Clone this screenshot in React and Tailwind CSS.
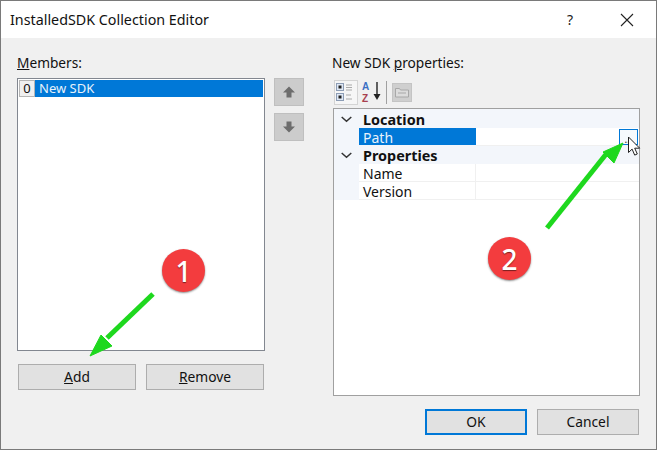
import React from "react";

const FONT = "font-['Noto_Sans','Open_Sans',sans-serif]";

function WinButton({ children, focused, className = "" }) {
  return (
    <div
      className={`flex items-center justify-center h-[26px] bg-[#e1e1e1] text-[13.8px] text-[#111] ${
        focused ? "border-2 border-[#0078d7]" : "border border-[#adadad]"
      } ${className}`}
    >
      {children}
    </div>
  );
}

function MoveButton({ down }) {
  return (
    <div className="flex items-center justify-center w-[30px] h-[28px] bg-[#cccccc] border border-[#bfbfbf]">
      <svg width="14" height="14" viewBox="0 0 14 14" className={down ? "rotate-180" : ""}>
        <path d="M7 1.5 L13 7.5 H9.5 V12.5 H4.5 V7.5 H1 Z" fill="#6d6d6d" />
      </svg>
    </div>
  );
}

function Chevron() {
  return (
    <svg width="11" height="7" viewBox="0 0 11 7" className="ml-[7px] mt-[1px]">
      <path d="M0.7 1 L5.5 5.2 L10.3 1" fill="none" stroke="#333" strokeWidth="1.5" />
    </svg>
  );
}

function CategoryRow({ label, first }) {
  return (
    <div className={`flex items-center bg-[#f3f6fb] ${first ? "h-[19px] pt-[1px]" : "h-[18px]"}`}>
      <div className="w-[29px] flex items-center">
        <Chevron />
      </div>
      <span className="text-[14.4px] font-bold text-[#111] leading-[18px] pt-[1px]">{label}</span>
    </div>
  );
}

function PropRow({ label, selected, children }) {
  return (
    <div className="flex h-[18px] bg-[#f3f6fb]">
      <div className="w-[25px]" />
      <div
        className={`w-[117px] pl-[4px] text-[14px] leading-[20px] ${
          selected ? "bg-[#0078d7] text-[#e8f2fb] border-b border-[#f3f6fb]" : "bg-white border-b border-r border-[#f0f0f0] text-[#111]"
        }`}
      >
        {label}
      </div>
      <div className="flex-1 bg-white flex justify-end border-b border-[#f0f0f0]">{children}</div>
    </div>
  );
}

function Toolbar() {
  return (
    <div className="flex items-center h-[26px] ml-[2px] mt-[1px]">
      <div className="w-[24px] h-[25px] bg-[#f6f6f6] border border-[#d4d4d4] flex items-center justify-center">
        <svg width="20" height="20" viewBox="0 0 20 20">
          <rect x="0.5" y="1.5" width="7" height="7" fill="#dfe8f5" stroke="#8d9db5" />
          <rect x="2.5" y="3.5" width="3" height="3" fill="#222" />
          <rect x="0.5" y="11.5" width="7" height="7" fill="#dfe8f5" stroke="#8d9db5" />
          <rect x="2.5" y="13.5" width="3" height="3" fill="#222" />
          <path d="M10 3h6M10 5.5h6M10 8h6M10 13h5M10 17h6" stroke="#aaa" strokeWidth="1" />
        </svg>
      </div>
      <div className="relative w-[28px] h-[25px] font-['Liberation_Sans',sans-serif]">
        <span className="absolute left-[4px] top-[1px] text-[10px] leading-[12px] font-bold text-[#3b6fc4]">A</span>
        <span className="absolute left-[4px] top-[13px] text-[10px] leading-[12px] font-bold text-[#a8404f]">Z</span>
        <svg width="8" height="20" viewBox="0 0 8 20" className="absolute left-[15px] top-[2px]">
          <path d="M4 0 V14" stroke="#222" strokeWidth="1.4" />
          <path d="M0.5 12 H7.5 L4 18 Z" fill="#222" />
        </svg>
      </div>
      <div className="w-px h-[23px] bg-[#a0a0a0] mr-[5px]" />
      <div className="w-[20px] h-[19px] bg-[#cfcfcf] border border-[#c4c4c4] flex items-center justify-center">
        <svg width="16" height="12" viewBox="0 0 16 12">
          <path d="M1.5 2.5h4l1 1.5h8v7h-13z" fill="#dcdcdc" stroke="#a8a8a8" />
          <path d="M4 7h8" stroke="#a8a8a8" />
        </svg>
      </div>
    </div>
  );
}

function Annotations() {
  return (
    <svg width="657" height="450" viewBox="0 0 657 450" className="absolute left-0 top-0 pointer-events-none">
      <path d="M628.5 137 v15.5 l3.6 -3.4 l2.6 6 l2.6 -1.1 l-2.6 -5.8 h5 z" fill="#fff" stroke="#222" strokeWidth="1" />
      <path d="M153 294 L107 338" stroke="#1ed81e" strokeWidth="5" fill="none" />
      <path d="M90 356 L101 335 L112 346 Z" fill="#1ed81e" stroke="#1ed81e" strokeWidth="1" />
      <path d="M547 228 L607 153" stroke="#1ed81e" strokeWidth="5" fill="none" />
      <path d="M623 143 L603 152 L614 163 Z" fill="#1ed81e" stroke="#1ed81e" strokeWidth="1" />
    </svg>
  );
}

function Badge({ className, children }) {
  return (
    <div
      className={`absolute w-[43px] h-[43px] rounded-full bg-[#f33c3e] shadow-[0_1px_2px_rgba(0,0,0,0.45)] flex items-center justify-center text-white text-[28px] font-medium [text-shadow:0_1px_1px_rgba(0,0,0,0.5)] ${className}`}
    >
      {children}
    </div>
  );
}

export default function App() {
  return (
    <div className={`relative w-[657px] h-[450px] overflow-hidden bg-[#f0f0f0] border border-[#7a7a7a] ${FONT}`}>
      <div className="flex items-center justify-between h-[37px] bg-white pl-[9px]">
        <span className="text-[14.3px] text-[#111]">InstalledSDK Collection Editor</span>
        <div className="flex items-center">
          <span className="text-[14px] text-[#222] mr-[47px]">?</span>
          <svg width="14" height="14" viewBox="0 0 14 14" className="mr-[22px]">
            <path d="M1 1 L13 13 M13 1 L1 13" stroke="#222" strokeWidth="1.1" />
          </svg>
        </div>
      </div>

      <div className="flex pl-[16px] pt-[15px]">
        <div className="w-[248px]">
          <div className="h-[25px] text-[13.7px] leading-[20px] text-[#111]">
            <u>M</u>embers:
          </div>
          <div className="flex">
            <div className="w-[248px] h-[273px] shrink-0 bg-white border border-[#828790] p-px">
              <div className="flex h-[17px] bg-[#0078d7]">
                <div className="flex items-center justify-center w-[16px] bg-[#f0f0f0] border border-[#b5b5b5] text-[13px] text-[#111] leading-none">
                  0
                </div>
                <span className="pl-[4px] text-[13px] leading-[17px] text-[#e8f2fb]">New SDK</span>
              </div>
            </div>
            <div className="flex flex-col gap-[7px] ml-[9px] shrink-0">
              <MoveButton />
              <MoveButton down />
            </div>
          </div>
          <div className="flex gap-[10px] mt-[13px] ml-px">
            <WinButton className="w-[118px]">
              <span>
                <u>A</u>dd
              </span>
            </WinButton>
            <WinButton className="w-[118px]">
              <span>
                <u>R</u>emove
              </span>
            </WinButton>
          </div>
        </div>

        <div className="w-[308px] ml-[67px]">
          <div className="h-[25px] text-[13.7px] leading-[20px] text-[#111]">
            New SDK <u>p</u>roperties:
          </div>
          <Toolbar />
          <div className="w-[307px] h-[288px] ml-px mt-[3px] bg-white border border-[#a0a0a0]">
            <CategoryRow label="Location" first />
            <PropRow label="Path" selected>
              <div className="w-[19px] h-[16px] bg-[#f6fafd] border border-[#0078d7] mr-px mt-px flex items-end justify-center text-[10px] leading-[10px] text-[#111]">
                ...
              </div>
            </PropRow>
            <CategoryRow label="Properties" />
            <PropRow label="Name" />
            <PropRow label="Version" />
          </div>
        </div>
      </div>

      <div className="flex justify-end gap-[10px] mt-[13px] pr-[17px]">
        <WinButton focused className="w-[102px]">OK</WinButton>
        <WinButton className="w-[102px]">Cancel</WinButton>
      </div>

      <Badge className="left-[161px] top-[248px]">1</Badge>
      <Badge className="left-[487px] top-[236px]">2</Badge>
      <div className="absolute left-0 top-0 -ml-px -mt-px">
        <Annotations />
      </div>
    </div>
  );
}
